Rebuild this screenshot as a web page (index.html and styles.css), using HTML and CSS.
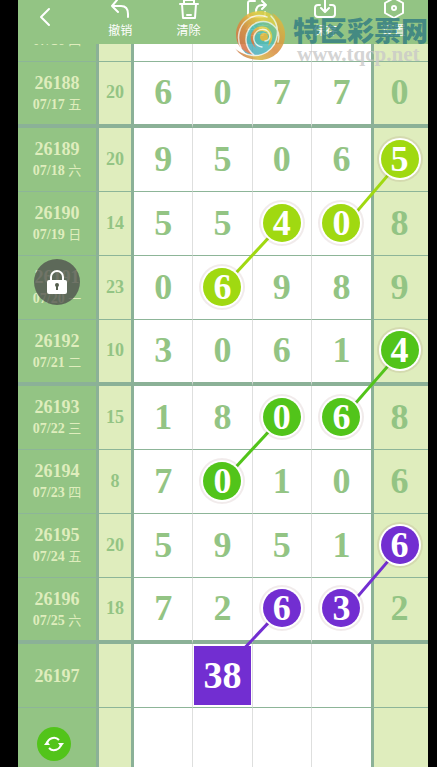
FILE: index.html
```html
<!DOCTYPE html>
<html lang="zh-CN">
<head>
  <meta charset="UTF-8">
  <meta name="viewport" content="width=device-width, initial-scale=1">
  <title>走势图</title>
  <link rel="stylesheet" href="styles.css">
</head>
<body>
  <div class="screen">
    <header class="toolbar">
      <button class="back" aria-label="返回">
        <svg width="14" height="20" viewBox="0 0 14 20"><path d="M11 2L3 10l8 8"/></svg>
      </button>
      <nav class="actions">
        <button class="action">
          <svg width="24" height="24" viewBox="0 0 24 24"><path d="M9 3L4 9l6 6M4 9h9c5 0 7 3 7 8v3"/></svg>
          <span>撤销</span>
        </button>
        <button class="action">
          <svg width="24" height="24" viewBox="0 0 24 24"><path d="M3 7h18M7 7V3h10v4M5 7l1 14h12l1-14M10 18h4"/></svg>
          <span>清除</span>
        </button>
        <button class="action">
          <svg width="24" height="24" viewBox="0 0 24 24"><path d="M10 4H5a2 2 0 0 0-2 2v12a2 2 0 0 0 2 2h13a2 2 0 0 0 2-2v-3M17 4l4 4-4 4M21 8h-4c-4 0-6 2-6 7"/></svg>
          <span>分享</span>
        </button>
        <button class="action">
          <svg width="24" height="24" viewBox="0 0 24 24"><path d="M7 8H5a3 3 0 0 0-3 3v6a3 3 0 0 0 3 3h14a3 3 0 0 0 3-3v-6a3 3 0 0 0-3-3h-2M12 3v11M8 11l4 4 4-4"/></svg>
          <span>保存</span>
        </button>
        <button class="action">
          <svg width="24" height="24" viewBox="0 0 24 24"><path d="M12 1l9 5v10l-9 5-9-5V6z"/><circle cx="12" cy="11" r="2"/></svg>
          <span>设置</span>
        </button>
      </nav>
    </header>

    <div class="watermark">
      <svg class="watermark-logo" width="52" height="52" viewBox="0 0 52 52">
        <defs>
          <linearGradient id="warm" x1="0" y1="1" x2="1" y2="0">
            <stop offset="0" stop-color="#d2604a"/>
            <stop offset=".4" stop-color="#dd8a3e"/>
            <stop offset=".7" stop-color="#e8cf45"/>
            <stop offset="1" stop-color="#c9cf4a"/>
          </linearGradient>
          <linearGradient id="cool" x1="0" y1="1" x2="1" y2="0">
            <stop offset="0" stop-color="#4f9fc0"/>
            <stop offset=".5" stop-color="#4bbcb8"/>
            <stop offset="1" stop-color="#b5cc55"/>
          </linearGradient>
          <linearGradient id="edge" x1="1" y1="0" x2="0" y2="1">
            <stop offset="0" stop-color="#dcc844"/>
            <stop offset=".5" stop-color="#d98a3e"/>
            <stop offset=".75" stop-color="#d8b944"/>
            <stop offset="1" stop-color="#c94b4b"/>
          </linearGradient>
        </defs>
        <circle cx="27" cy="27" r="23" fill="url(#cool)"/>
        <path fill="url(#warm)" d="M28 2C14 1 3 11 2 24c0 6 1 10 4 14 4 4 9 7 14 8-7-6-9-14-7-21 2-8 9-13 17-13 8 1 13 6 15 12C46 12 39 3 28 2z"/>
        <path fill="url(#edge)" d="M38 4c9 5 14 14 13 24-1 13-12 23-25 23C15 51 6 47 1 39c9 8 23 10 32 4 11-7 15-25 5-39z"/>
        <path fill="url(#warm)" d="M22 39c-6-5-7-12-3-17 4-6 12-6 16-2 5 5 4 13-1 17 2-6 2-11-2-14-4-2-8-1-10 2-3 4-3 9 0 14z"/>
        <circle cx="30" cy="28" r="4" fill="#e6b83f"/>
        <path class="swirl" d="M1 39c10 8 23 10 32 4 12-8 14-26 4-36M20 46C11 39 10 28 15 20c5-8 17-10 24-4 5 4 7 10 5 17M28 38c-7-1-10-8-7-13 3-6 11-6 14-1 2 4 0 8-4 8"/>
        <path class="swirl" d="M7 39C2 29 5 17 13 11c6-5 14-5 20-3"/>
      </svg>
      <div class="watermark-text">
        <div class="watermark-name">特区彩票网</div>
        <div class="watermark-url">www.tqcp.net</div>
      </div>
    </div>

    <main class="board">
      <table class="chart">
        <colgroup>
          <col class="col-issue">
          <col class="col-sum">
          <col><col><col><col>
          <col class="col-last">
        </colgroup>
        <tbody>
          <tr>
            <th scope="row">26187<small>07/16 <i>四</i></small></th>
            <td class="sum"></td><td></td><td></td><td></td><td></td><td class="last"></td>
          </tr>
          <tr class="group-end">
            <th scope="row">26188<small>07/17 <i>五</i></small></th>
            <td class="sum">20</td><td>6</td><td>0</td><td>7</td><td>7</td><td class="last">0</td>
          </tr>
          <tr>
            <th scope="row">26189<small>07/18 <i>六</i></small></th>
            <td class="sum">20</td><td>9</td><td>5</td><td>0</td><td>6</td>
            <td class="last">
              <svg class="link lime"><line x1="100%" y1="0" x2="0" y2="100%"/></svg>
              <span class="ball lime">5</span>
            </td>
          </tr>
          <tr>
            <th scope="row">26190<small>07/19 <i>日</i></small></th>
            <td class="sum">14</td><td>5</td><td>5</td>
            <td>
              <svg class="link lime"><line x1="100%" y1="0" x2="0" y2="100%"/></svg>
              <span class="ball lime">4</span>
            </td>
            <td><span class="ball lime">0</span></td><td class="last">8</td>
          </tr>
          <tr>
            <th scope="row">26191<small>07/20 <i>一</i></small></th>
            <td class="sum">23</td><td>0</td><td><span class="ball lime">6</span></td><td>9</td><td>8</td><td class="last">9</td>
          </tr>
          <tr class="group-end">
            <th scope="row">26192<small>07/21 <i>二</i></small></th>
            <td class="sum">10</td><td>3</td><td>0</td><td>6</td><td>1</td>
            <td class="last">
              <svg class="link green"><line x1="100%" y1="0" x2="0" y2="100%"/></svg>
              <span class="ball green">4</span>
            </td>
          </tr>
          <tr>
            <th scope="row">26193<small>07/22 <i>三</i></small></th>
            <td class="sum">15</td><td>1</td><td>8</td>
            <td>
              <svg class="link green"><line x1="100%" y1="0" x2="0" y2="100%"/></svg>
              <span class="ball green">0</span>
            </td>
            <td><span class="ball green">6</span></td><td class="last">8</td>
          </tr>
          <tr>
            <th scope="row">26194<small>07/23 <i>四</i></small></th>
            <td class="sum">8</td><td>7</td><td><span class="ball green">0</span></td><td>1</td><td>0</td><td class="last">6</td>
          </tr>
          <tr>
            <th scope="row">26195<small>07/24 <i>五</i></small></th>
            <td class="sum">20</td><td>5</td><td>9</td><td>5</td><td>1</td>
            <td class="last">
              <svg class="link purple"><line x1="100%" y1="0" x2="0" y2="100%"/></svg>
              <span class="ball purple">6</span>
            </td>
          </tr>
          <tr class="group-end">
            <th scope="row">26196<small>07/25 <i>六</i></small></th>
            <td class="sum">18</td><td>7</td><td>2</td>
            <td>
              <svg class="link purple"><line x1="100%" y1="0" x2="0" y2="100%"/></svg>
              <span class="ball purple">6</span>
            </td>
            <td><span class="ball purple">3</span></td><td class="last">2</td>
          </tr>
          <tr>
            <th scope="row">26197</th>
            <td class="sum"></td><td></td>
            <td class="pick"><span class="tile purple">38</span></td>
            <td></td><td></td><td class="last"></td>
          </tr>
          <tr>
            <th scope="row"></th>
            <td class="sum"></td><td></td><td></td><td></td><td></td><td class="last"></td>
          </tr>
        </tbody>
      </table>
    </main>

    <button class="lock" aria-label="锁定">
      <svg width="22" height="26" viewBox="0 0 22 26">
        <path d="M5 12V8a6 6 0 0 1 12 0v4" fill="none" stroke="#fff" stroke-width="2"/>
        <rect x="1" y="11" width="20" height="14" rx="2" fill="#fff"/>
        <circle cx="11" cy="16" r="2" fill="#555f4f"/>
        <path d="M11 17v4" stroke="#555f4f" stroke-width="2"/>
      </svg>
    </button>
    <button class="refresh" aria-label="刷新">
      <svg width="20" height="18" viewBox="0 0 20 18">
        <path d="M3 9a7 7 0 0 1 12-4M17 9a7 7 0 0 1-12 4" fill="none" stroke="#fff" stroke-width="2"/>
        <path d="M0 10l3-4 3 4zM14 8l3 4 3-4z" fill="#fff"/>
      </svg>
    </button>
  </div>
</body>
</html>
```

FILE: styles.css
```css
* {
  box-sizing: border-box;
}
body {
  margin: 0;
  padding: 0 9px 0 18px;
  background: #000;
  font-family: "Liberation Serif", "Noto Sans CJK SC", serif;
}
button {
  border: none;
  padding: 0;
  background: none;
  color: #fff;
  cursor: pointer;
}
.screen {
  position: relative;
  height: 100vh;
  overflow: hidden;
  background: #fff;
}

/* toolbar */
.toolbar {
  position: relative;
  z-index: 5;
  display: flex;
  height: 44px;
  background: #93c484;
}
.toolbar svg {
  flex-shrink: 0;
  fill: none;
  stroke: #fff;
  stroke-width: 2;
  stroke-linecap: round;
  stroke-linejoin: round;
}
.back {
  width: 68px;
  padding: 0 14px 8px 0;
}
.actions {
  display: flex;
  flex: 1;
}
.action {
  flex: 1;
  display: flex;
  flex-direction: column;
  align-items: center;
  justify-content: flex-end;
  gap: 1px;
  padding-bottom: 6px;
  font: 12px/16px "Noto Sans CJK SC", sans-serif;
}

/* watermark over the toolbar */
.watermark {
  position: absolute;
  z-index: 6;
  top: 9px;
  right: 0;
  display: flex;
  gap: 7px;
  pointer-events: none;
}
.watermark-logo {
  opacity: 0.85;
}
.swirl {
  fill: none;
  stroke: #fff;
  stroke-width: 1.5;
  stroke-linecap: round;
  opacity: 0.8;
}
.watermark-text {
  padding-top: 5px;
  white-space: nowrap;
}
.watermark-name {
  font: 900 27px/32px "Noto Sans CJK SC", sans-serif;
  color: rgba(46, 122, 130, 0.8);
}
.watermark-url {
  padding-left: 4px;
  font-size: 21px;
  font-weight: bold;
  line-height: 16px;
  color: rgba(200, 200, 200, 0.8);
}

/* chart */
.board {
  margin-top: -46px;
}
.chart {
  width: 100%;
  table-layout: fixed;
  border-collapse: separate;
  border-spacing: 0;
  font-weight: bold;
}
.col-issue {
  width: 81px;
}
.col-sum {
  width: 35px;
}
.col-last {
  width: 57px;
}
.chart th,
.chart td {
  position: relative;
  height: 64px;
  padding: 0;
  text-align: center;
  vertical-align: middle;
  border-bottom: 1px solid #8db598;
}
.chart td {
  padding-bottom: 2px;
  border-right: 1px solid #dedfde;
  font-size: 36px;
  line-height: 40px;
  color: #93c484;
}
.chart .group-end th,
.chart .group-end td {
  height: 66px;
  border-bottom: 4px solid #8bb197;
}
.chart th {
  border-right: 3px solid #8bb197;
  background: #93c484;
  color: #dfedbd;
  font-size: 18px;
  line-height: 22px;
}
.chart small {
  display: block;
  font-size: 14px;
  line-height: 20px;
}
.chart i {
  font: 13px/20px "Noto Sans CJK SC", sans-serif;
}
.chart .sum {
  border-right: 3px solid #8bb197;
  background: #dfedbd;
  font-size: 18px;
}
.chart .last {
  padding-right: 3px;
  border-left: 3px solid #8bb197;
  border-right: none;
  background: #dfedbd;
}
.chart td:nth-last-child(2) {
  border-right: none;
}

/* marked numbers */
.lime {
  background: #a0d911;
  stroke: #a0d911;
}
.green {
  background: #52c41a;
  stroke: #52c41a;
}
.purple {
  background: #722ed1;
  stroke: #722ed1;
}
.ball {
  position: relative;
  z-index: 2;
  display: block;
  width: 38px;
  height: 38px;
  margin: 0 auto;
  border-radius: 50%;
  box-shadow: 0 0 0 2px #fff, 0 0 0 4px rgba(120, 60, 60, 0.1);
  color: #fff;
  line-height: 38px;
}
.link {
  position: absolute;
  z-index: 1;
  top: 50%;
  left: -50%;
  width: 100%;
  height: 100%;
  background: none;
  stroke-width: 3;
}
.chart .pick {
  padding: 2px 1px;
}
.tile {
  position: relative;
  z-index: 2;
  display: block;
  color: #fff;
  font-size: 38px;
  line-height: 59px;
}

/* floating buttons */
.lock,
.refresh {
  position: absolute;
  z-index: 4;
  display: flex;
  align-items: center;
  justify-content: center;
  border-radius: 50%;
}
.lock {
  top: 259px;
  left: 16px;
  width: 46px;
  height: 46px;
  background: rgba(75, 75, 75, 0.75);
}
.refresh {
  bottom: 6px;
  left: 19px;
  width: 34px;
  height: 34px;
  background: #52c41a;
}
```
